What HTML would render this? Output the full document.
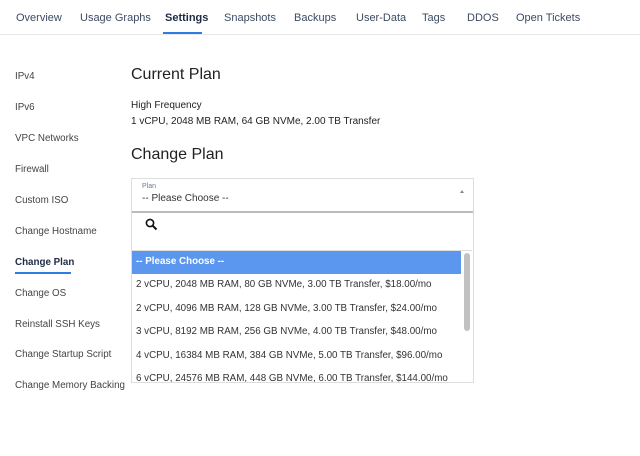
<!DOCTYPE html><html><head><style>
body{margin:0;width:640px;height:456px;background:#fff;font-family:"Liberation Sans",sans-serif;position:relative;overflow:hidden;color:#333}
.a{position:absolute;white-space:nowrap}
.tab{top:12px;font-size:11px;color:#3c4a63}
.side{left:15px;font-size:9.8px;color:#444}
.opt{left:136px;font-size:9.8px;color:#333}
</style></head><body>
<div class="a" style="left:0;top:34px;width:640px;height:1px;background:#e5e7eb"></div>
<div class="a tab" style="left:16px">Overview</div>
<div class="a tab" style="left:80px">Usage Graphs</div>
<div class="a tab" style="left:165px;color:#1e2b45;font-weight:bold">Settings</div>
<div class="a" style="left:163px;top:32px;width:39px;height:2px;background:#2f7de1"></div>
<div class="a tab" style="left:224px">Snapshots</div>
<div class="a tab" style="left:294px">Backups</div>
<div class="a tab" style="left:356px">User-Data</div>
<div class="a tab" style="left:422px">Tags</div>
<div class="a tab" style="left:467px">DDOS</div>
<div class="a tab" style="left:516px">Open Tickets</div>
<div class="a side" style="top:71px">IPv4</div>
<div class="a side" style="top:102px">IPv6</div>
<div class="a side" style="top:133px">VPC Networks</div>
<div class="a side" style="top:164px">Firewall</div>
<div class="a side" style="top:195px">Custom ISO</div>
<div class="a side" style="top:226px">Change Hostname</div>
<div class="a side" style="top:257px;color:#1e2b45;font-weight:bold">Change Plan</div>
<div class="a" style="left:15px;top:272px;width:56px;height:2px;background:#2f7de1"></div>
<div class="a side" style="top:288px">Change OS</div>
<div class="a side" style="top:319px">Reinstall SSH Keys</div>
<div class="a side" style="top:349px">Change Startup Script</div>
<div class="a side" style="top:380px">Change Memory Backing</div>
<div class="a" style="left:131px;top:66px;font-size:16px;color:#222">Current Plan</div>
<div class="a" style="left:131px;top:100px;font-size:10px;color:#222">High Frequency</div>
<div class="a" style="left:131px;top:116px;font-size:10px;color:#222">1 vCPU, 2048 MB RAM, 64 GB NVMe, 2.00 TB Transfer</div>
<div class="a" style="left:131px;top:146px;font-size:16px;color:#222">Change Plan</div>
<div class="a" style="left:131px;top:178px;width:341px;height:32px;border:1px solid #ddd;border-bottom:2px solid #bbb"></div>
<div class="a" style="left:142px;top:183px;font-size:7px;color:#6a7a95">Plan</div>
<div class="a" style="left:142px;top:193px;font-size:10px;color:#333">-- Please Choose --</div>
<div class="a" style="left:460px;top:190px;width:0;height:0;border-left:2.5px solid transparent;border-right:2.5px solid transparent;border-bottom:3px solid #888"></div>
<div class="a" style="left:131px;top:212px;width:341px;height:170px;border:1px solid #ddd;border-top:none"></div>
<svg class="a" style="left:145px;top:218px" width="13" height="13" viewBox="0 0 13 13"><circle cx="5" cy="5" r="3.6" fill="none" stroke="#111" stroke-width="1.6"/><path d="M7.6 7.6L11.5 11.5" stroke="#111" stroke-width="2"/></svg>
<div class="a" style="left:132px;top:250px;width:340px;height:1px;background:#ddd"></div>
<div class="a" style="left:132px;top:251px;width:329px;height:23px;background:#5b97ee"></div>
<div class="a" style="left:136px;top:256px;font-size:9.8px;color:#fff;font-weight:bold">-- Please Choose --</div>
<div class="a" style="left:464px;top:253px;width:6px;height:78px;background:#c1c1c1;border-radius:3px"></div>
<div class="a opt" style="top:279px">2 vCPU, 2048 MB RAM, 80 GB NVMe, 3.00 TB Transfer, $18.00/mo</div>
<div class="a opt" style="top:303px">2 vCPU, 4096 MB RAM, 128 GB NVMe, 3.00 TB Transfer, $24.00/mo</div>
<div class="a opt" style="top:326px">3 vCPU, 8192 MB RAM, 256 GB NVMe, 4.00 TB Transfer, $48.00/mo</div>
<div class="a opt" style="top:350px">4 vCPU, 16384 MB RAM, 384 GB NVMe, 5.00 TB Transfer, $96.00/mo</div>
<div style="position:absolute;left:132px;top:370px;width:330px;height:12px;overflow:hidden"><div class="a opt" style="left:4px;top:3px">6 vCPU, 24576 MB RAM, 448 GB NVMe, 6.00 TB Transfer, $144.00/mo</div></div>
</body></html>
